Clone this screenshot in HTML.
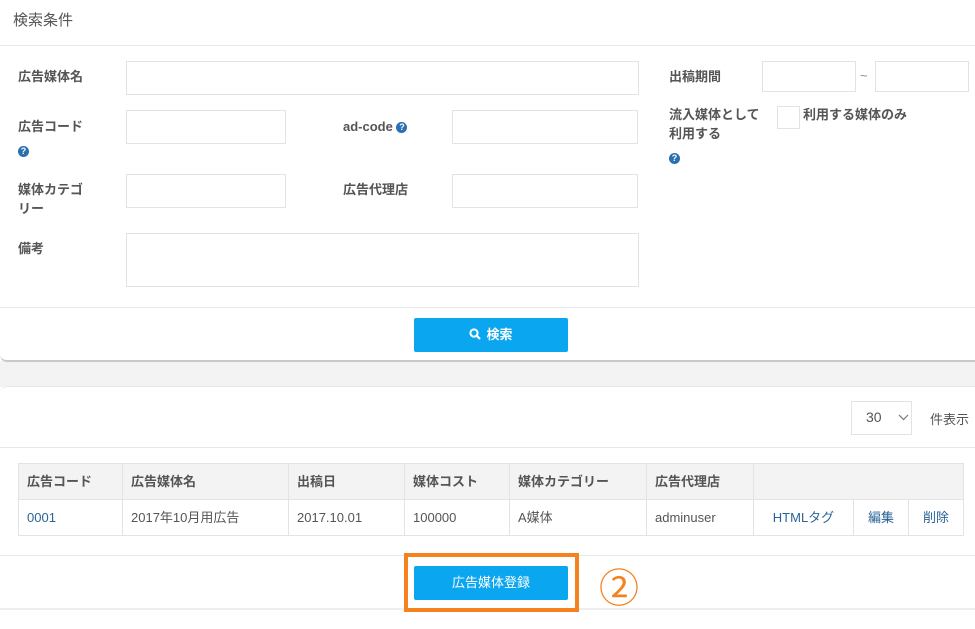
<!DOCTYPE html>
<html><head><meta charset="utf-8"><style>
*{box-sizing:border-box;margin:0;padding:0}
body{width:975px;height:629px;background:#fff;font-family:"Liberation Sans","Noto Sans CJK JP",sans-serif;color:#555;position:relative;overflow:hidden}
.a{position:absolute}
.lb{position:absolute;font-size:13px;font-weight:bold;color:#555;line-height:19px}
.in{position:absolute;border:1px solid #e3e3e3;background:#fff}
.q{display:inline-block;width:11px;height:11px;border-radius:50%;background:#2a6fb0;color:#fff;font-size:9px;font-weight:bold;text-align:center;line-height:11px;vertical-align:middle}
.hl{position:absolute;left:0;width:975px;height:1px;background:#e8e8e8}
.btn{position:absolute;background:#0aa6ef;color:#fff;font-size:13px;text-align:center;line-height:33px;border-radius:2px}
table{position:absolute;left:18px;top:463px;border-collapse:collapse;font-size:13px}
td{border:1px solid #e3e3e3;padding:0 8px;height:36px;color:#555;vertical-align:middle;line-height:16px}
tr.h td{background:#f3f3f4;font-weight:bold;height:36px}
.lk{color:#2a6496}
</style></head><body>
<div class="a" style="left:0;top:361px;width:975px;height:26px;background:#f3f3f4"></div>
<div class="a" style="left:0;top:355px;width:975px;height:7px;border-bottom:2px solid #c9c9c9;border-radius:0 0 0 8px;background:#fff"></div>
<div class="a" style="left:0;top:386px;width:975px;height:224px;border-top:1px solid #e8e8e8;border-radius:8px 0 0 8px;background:#fff"></div>
<div class="a" style="left:0;top:608px;width:975px;height:2px;background:#eee"></div>
<div class="a" style="left:0;top:610px;width:975px;height:19px;background:#fff"></div>

<div class="a" style="left:13px;top:9px;font-size:15px;color:#555">検索条件</div>
<div class="hl" style="top:45px"></div>

<div class="lb" style="left:18px;top:67px">広告媒体名</div>
<div class="in" style="left:126px;top:61px;width:513px;height:34px"></div>

<div class="lb" style="left:18px;top:117px">広告コード</div>
<div class="a" style="left:18px;top:143px"><span class="q">?</span></div>
<div class="in" style="left:126px;top:110px;width:160px;height:34px"></div>
<div class="lb" style="left:343px;top:117px">ad-code <span class="q">?</span></div>
<div class="in" style="left:452px;top:110px;width:186px;height:34px"></div>

<div class="lb" style="left:18px;top:180px">媒体カテゴ<br>リー</div>
<div class="in" style="left:126px;top:174px;width:160px;height:34px"></div>
<div class="lb" style="left:343px;top:180px">広告代理店</div>
<div class="in" style="left:452px;top:174px;width:186px;height:34px"></div>

<div class="lb" style="left:18px;top:239px">備考</div>
<div class="in" style="left:126px;top:233px;width:513px;height:54px"></div>

<div class="lb" style="left:669px;top:67px">出稿期間</div>
<div class="in" style="left:762px;top:61px;width:94px;height:31px"></div>
<div class="a" style="left:860px;top:68px;font-size:13px;color:#888">~</div>
<div class="in" style="left:875px;top:61px;width:94px;height:31px"></div>
<div class="lb" style="left:669px;top:105px">流入媒体として<br>利用する</div>
<div class="a" style="left:669px;top:150px"><span class="q">?</span></div>
<div class="in" style="left:777px;top:106px;width:23px;height:23px"></div>
<div class="lb" style="left:803px;top:105px">利用する媒体のみ</div>

<div class="hl" style="top:307px"></div>
<div class="btn" style="left:414px;top:318px;width:154px;height:34px;font-weight:bold"><svg width="12" height="12" viewBox="0 0 12 12" style="vertical-align:-1px;margin-right:5px"><circle cx="5" cy="5" r="3.6" fill="none" stroke="#fff" stroke-width="2"/><path d="M7.5 7.5L11 11" stroke="#fff" stroke-width="2.2"/></svg>検索</div>

<div class="in" style="left:851px;top:401px;width:61px;height:34px"></div>
<div class="a" style="left:866px;top:409px;font-size:14px;color:#555">30</div>
<svg class="a" style="left:898px;top:414px" width="11" height="7" viewBox="0 0 11 7"><path d="M1 1l4.5 4.5L10 1" fill="none" stroke="#777" stroke-width="1.2"/></svg>
<div class="a" style="left:930px;top:409px;font-size:13px;color:#555">件表示</div>
<div class="hl" style="top:447px"></div>

<table>
<tr class="h"><td style="width:104px">広告コード</td><td style="width:166px">広告媒体名</td><td style="width:116px">出稿日</td><td style="width:105px">媒体コスト</td><td style="width:137px">媒体カテゴリー</td><td style="width:107px">広告代理店</td><td colspan="3" style="width:210px"></td></tr>
<tr><td class="lk">0001</td><td>2017年10月用広告</td><td>2017.10.01</td><td>100000</td><td>A媒体</td><td>adminuser</td><td class="lk" style="width:100px;text-align:center">HTMLタグ</td><td class="lk" style="width:55px;text-align:center">編集</td><td class="lk" style="width:55px;text-align:center">削除</td></tr>
</table>

<div class="hl" style="top:555px"></div>
<div class="btn" style="left:414px;top:566px;width:154px;height:34px">広告媒体登録</div>
<div class="a" style="left:404px;top:553px;width:175px;height:59px;border:4px solid #f5821f"></div>
<div class="a" style="left:599px;top:562px;font-size:40px;line-height:46px;color:#f5821f;font-family:'Noto Sans CJK JP',sans-serif">②</div>
</body></html>
